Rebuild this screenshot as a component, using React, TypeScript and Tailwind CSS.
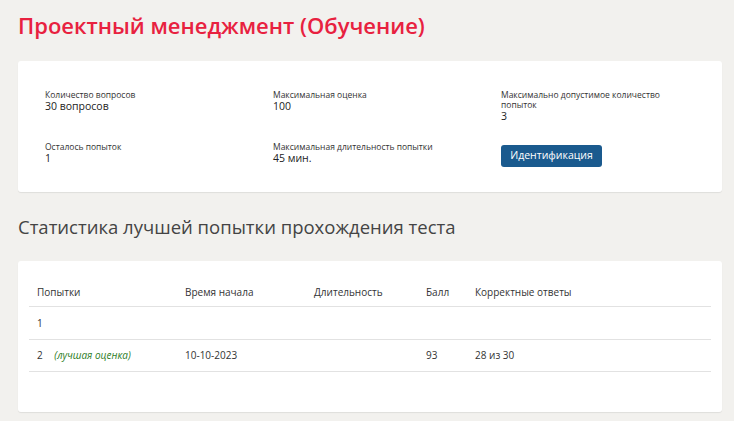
const info = [
  { label: "Количество вопросов", value: "30 вопросов" },
  { label: "Максимальная оценка", value: "100" },
  { label: "Максимально допустимое количество попыток", value: "3" },
];

export default function App() {
  return (
    <div className="min-h-[421px] bg-[#f2f1ee] pl-[18px] pr-[12px] pt-[10px] pb-2 font-['Open_Sans',sans-serif]">
      <h1 className="text-[22px] font-semibold leading-[30px] text-[#e8213f]">
        Проектный менеджмент (Обучение)
      </h1>

      <section className="mt-[21px] rounded-[3px] bg-white pl-[27px] pr-[20px] pt-[29px] pb-[25px] shadow-[0_1px_1px_rgba(0,0,0,0.08)]">
        <div className="grid grid-cols-[228px_228px_1fr] gap-y-[20px]">
          {info.map((it) => (
            <div key={it.label} className="max-w-[170px]">
              <div className="text-[8.5px] leading-[10px] text-[#333]">{it.label}</div>
              <div className="text-[10.5px] leading-[12px] text-[#222]">{it.value}</div>
            </div>
          ))}
          <div>
            <div className="text-[8.5px] leading-[10px] text-[#333]">Осталось попыток</div>
            <div className="text-[10.5px] leading-[12px] text-[#222]">1</div>
          </div>
          <div>
            <div className="text-[8.5px] leading-[10px] text-[#333]">Максимальная длительность попытки</div>
            <div className="text-[10.5px] leading-[12px] font-medium text-[#222]">45 мин.</div>
          </div>
          <div className="-mt-[1px]">
            <button className="h-[22px] w-[101px] rounded-[3px] bg-[#1a5a8e] text-[10.5px] font-normal text-white">
              Идентификация
            </button>
          </div>
        </div>
      </section>

      <h2 className="mt-[22px] text-[18.5px] font-normal leading-[26px] text-[#444]">
        Статистика лучшей попытки прохождения теста
      </h2>

      <section className="mt-[21px] rounded-[3px] bg-white px-[11px] pt-[18px] pb-[40px] shadow-[0_1px_1px_rgba(0,0,0,0.08)]">
        <table className="w-full border-collapse text-left text-[10px] text-[#333]">
          <thead>
            <tr className="border-b border-[#e2e2e2]">
              <th className="h-[28px] w-[156px] pl-2 font-normal">Попытки</th>
              <th className="w-[129px] font-normal">Время начала</th>
              <th className="w-[112px] font-normal">Длительность</th>
              <th className="w-[49px] font-normal">Балл</th>
              <th className="font-normal">Корректные ответы</th>
            </tr>
          </thead>
          <tbody>
            <tr className="border-b border-[#e2e2e2]">
              <td className="h-[33px] pl-2">1</td>
              <td></td>
              <td></td>
              <td></td>
              <td></td>
            </tr>
            <tr className="border-b border-[#e2e2e2]">
              <td className="h-[32px] pl-2">
                2 <span className="ml-[9px] text-[10px] italic text-[#2e7d1f]">(лучшая оценка)</span>
              </td>
              <td>10-10-2023</td>
              <td></td>
              <td>93</td>
              <td>28 из 30</td>
            </tr>
          </tbody>
        </table>
      </section>
    </div>
  );
}
